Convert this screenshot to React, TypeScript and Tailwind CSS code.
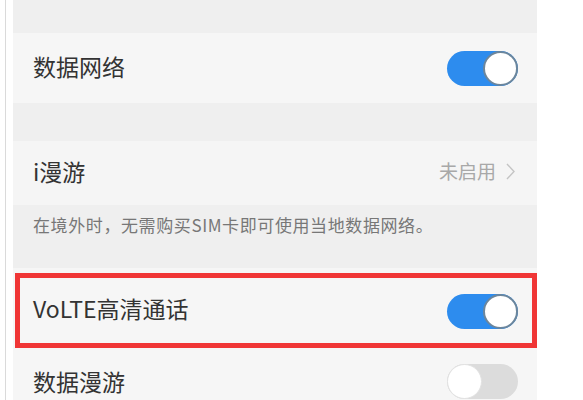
import React from 'react';

const font = { fontFamily: '"Noto Sans CJK SC", "Noto Sans", sans-serif' };

function Toggle({ on }: { on: boolean }) {
  return on ? (
    <div className="flex h-[35px] w-[71px] items-center justify-end rounded-full bg-[#2d8cee]">
      <div className="h-[35px] w-[35px] rounded-full border-2 border-[#6c869c] bg-white" />
    </div>
  ) : (
    <div className="flex h-[35px] w-[71px] items-center justify-start rounded-full bg-[#dcdcdc]">
      <div className="h-[35px] w-[35px] rounded-full border border-[#e2e2e2] bg-white" />
    </div>
  );
}

export default function App() {
  return (
    <div className="flex h-[400px] w-[583px] overflow-hidden bg-white" style={font}>
      <div className="ml-[5px] w-px bg-[#dadada]" />
      <div className="ml-[7px] flex w-[524px] flex-col bg-[#efefef]">
        <div className="h-[33px] shrink-0" />

        <div className="flex h-[70px] shrink-0 items-center justify-between bg-[#f6f6f6] pl-[20px] pr-[19px]">
          <span className="mb-[4px] text-[23px] text-[#333]">数据网络</span>
          <Toggle on />
        </div>

        <div className="h-[38px] shrink-0" />

        <div className="flex h-[64px] shrink-0 items-center justify-between bg-[#f5f5f5] pl-[20px] pr-[22px]">
          <span className="mb-[4px] text-[23px] text-[#333]">i漫游</span>
          <span className="mb-[4px] flex items-center gap-[10px] text-[19px] text-[#a8a8a8]">
            未启用
            <svg width="9" height="17" viewBox="0 0 9 17" fill="none">
              <path d="M1 1l7 7.5-7 7.5" stroke="#c4c4c4" strokeWidth="1.4" />
            </svg>
          </span>
        </div>

        <div className="flex h-[63px] shrink-0 items-start pl-[20px] pt-[7px]">
          <span className="text-[17px] tracking-[0.6px] text-[#777]">在境外时，无需购买SIM卡即可使用当地数据网络。</span>
        </div>

        <div className="relative flex h-[80px] shrink-0 items-center justify-between bg-[#f6f6f6] pl-[20px] pr-[19px]">
          <span className="text-[23px] text-[#333]">VoLTE高清通话</span>
          <div className="mt-[6px]">
            <Toggle on />
          </div>
          <div className="absolute bottom-0 left-[2px] right-0 top-[5px] border-[5px] border-[#f03636]" />
        </div>

        <div className="flex h-[60px] shrink-0 items-center justify-between bg-[#f6f6f6] pl-[20px] pr-[19px] pt-[6px]">
          <span className="text-[23px] text-[#333]">数据漫游</span>
          <Toggle on={false} />
        </div>
      </div>
    </div>
  );
}
